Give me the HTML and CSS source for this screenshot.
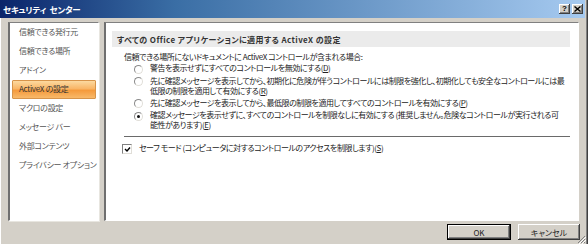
FILE: index.html
```html
<!doctype html>
<html lang="ja">
  <head>
    <meta charset="utf-8">
    <title>セキュリティ センター</title>
    <link rel="stylesheet" href="styles.css">
  </head>
  <body>
    <div class="window">
      <div class="titlebar">
        <span class="title">セキュリティ&nbsp;センター</span>
        <div class="caption-buttons">
          <span class="cap-btn help">?</span>
          <span class="cap-btn close">
            <svg width="7" height="6" viewBox="0 0 7 6"><path d="M0.5 0.5 L6.5 5.5 M6.5 0.5 L0.5 5.5" stroke="#000" stroke-width="1.4"/></svg>
          </span>
        </div>
      </div>

      <div class="content">
        <ul class="nav">
          <li>信頼できる発行元</li>
          <li>信頼できる場所</li>
          <li>アドイン</li>
          <li class="active">ActiveX の設定</li>
          <li>マクロの設定</li>
          <li>メッセージ バー</li>
          <li>外部コンテンツ</li>
          <li>プライバシー オプション</li>
        </ul>

        <div class="pane">
          <div class="section-head">すべての Office アプリケーションに適用する ActiveX の設定</div>
          <div class="settings">
            <div class="intro">信頼できる場所にないドキュメントに ActiveX コントロールが含まれる場合:</div>
            <div class="options">
              <div class="option">
                <span class="radio"></span>
                <span class="label">警告を表示せずにすべてのコントロールを無効にする(<u>D</u>)</span>
              </div>
              <div class="option">
                <span class="radio"></span>
                <span class="label">先に確認メッセージを表示してから、初期化に危険が伴うコントロールには制限を強化し、初期化しても安全なコントロールには最<br>低限の制限を適用して有効にする(<u>R</u>)</span>
              </div>
              <div class="option">
                <span class="radio"></span>
                <span class="label">先に確認メッセージを表示してから、最低限の制限を適用してすべてのコントロールを有効にする(<u>P</u>)</span>
              </div>
              <div class="option">
                <span class="radio checked"></span>
                <span class="label">確認メッセージを表示せずに、すべてのコントロールを制限なしに有効にする (推奨しません。危険なコントロールが実行される可<br>能性があります)(<u>E</u>)</span>
              </div>
            </div>
            <div class="separator"></div>
            <div class="option check-row">
              <span class="checkbox">
                <svg width="7" height="7" viewBox="0 0 7 7"><path d="M1 3 L3 5 L6 1.5" fill="none" stroke="#000" stroke-width="1.4"/></svg>
              </span>
              <span class="label">セーフ モード (コンピュータに対するコントロールのアクセスを制限します)(<u>S</u>)</span>
            </div>
          </div>
        </div>
      </div>

      <div class="footer">
        <button class="btn default">OK</button>
        <button class="btn">キャンセル</button>
      </div>

      <svg class="grip" width="10" height="10" viewBox="0 0 10 10">
        <path d="M9 2 L2 9 M9 5 L5 9 M9 8 L8 9" stroke="#808080" stroke-width="1"/>
        <path d="M10 3 L3 10 M10 6 L6 10" stroke="#fff" stroke-width="1"/>
      </svg>
    </div>
  </body>
</html>
```

FILE: styles.css
```css
body {
  margin: 0;
  width: 588px;
  height: 244px;
  overflow: hidden;
  background: #d4d0c8;
  font-family: "Noto Sans CJK JP", "Noto Sans", sans-serif;
  font-size: 8px;
  font-feature-settings: "palt";
  color: #222;
}
.window {
  position: relative;
  height: 244px;
  display: flex;
  flex-direction: column;
  box-shadow: inset -1px 0 #404040, inset -2px 0 #808080, inset 1px 0 #fff;
}
.titlebar {
  height: 18px;
  margin-right: 3px;
  display: flex;
  align-items: center;
  padding: 0 2px 0 3px;
  background: linear-gradient(to right, #0a246a 0%, #3a6ea5 30%, #a6caf0 100%);
}
.title {
  color: #fff;
  font-weight: bold;
  font-size: 8.5px;
  letter-spacing: -0.3px;
  word-spacing: 2px;
}
.caption-buttons {
  margin-left: auto;
  display: flex;
  gap: 2px;
}
.cap-btn {
  width: 11px;
  height: 10px;
  display: flex;
  align-items: center;
  justify-content: center;
  background: #d4d0c8;
  box-shadow: inset -1px -1px #404040, inset 1px 1px #fff, inset -2px -2px #808080;
  font-family: "Liberation Sans", sans-serif;
  font-weight: bold;
  font-size: 8px;
  line-height: 1;
  color: #000;
}
.content {
  display: flex;
  gap: 5px;
  padding: 4px 9px 0 8px;
  height: 199px;
}
.nav {
  list-style: none;
  margin: 0;
  width: 91px;
  flex-shrink: 0;
  box-sizing: border-box;
  padding: 0 2px;
  background: #fff;
  border-top: 1px solid #808080;
  border-left: 2px solid #6f6f6f;
  border-right: 1px solid #fff;
  border-bottom: 1px solid #fff;
  box-shadow: 1px 1px 0 #e8e6e0;
}
.nav li {
  height: 19px;
  display: flex;
  align-items: center;
  padding: 0 0 2px 7px;
  box-sizing: border-box;
  color: #555;
  white-space: nowrap;
  letter-spacing: -0.3px;
}
.nav li.active {
  padding-left: 6px;
  color: #333;
  border: 1px solid #d7944a;
  border-radius: 1px;
  background: linear-gradient(to bottom, #fcd9a0 0%, #f9b667 45%, #f59a3c 55%, #f8b96a 100%);
}
.pane {
  flex: 1;
  min-width: 0;
  overflow: hidden;
  background: #fff;
  border-top: 1px solid #808080;
  border-left: 2px solid #6f6f6f;
  border-right: 1px solid #fff;
  border-bottom: 1px solid #fff;
  padding: 8px 8px 0 6px;
}
.section-head {
  height: 16px;
  display: flex;
  align-items: center;
  padding-left: 5px;
  background: #ebebeb;
  font-weight: bold;
  color: #333;
  white-space: nowrap;
  letter-spacing: 0.4px;
}
.settings {
  padding: 0 0 0 12px;
  letter-spacing: -0.45px;
}
.intro {
  margin-top: 5px;
  line-height: 10px;
  white-space: nowrap;
}
.options {
  padding-left: 10px;
  display: flex;
  flex-direction: column;
  gap: 2px;
  margin-top: 1px;
}
.option {
  display: flex;
  align-items: flex-start;
  gap: 7px;
}
.label {
  line-height: 10px;
  white-space: nowrap;
}
.label u {
  text-decoration: underline;
  text-underline-offset: 1px;
}
.radio {
  width: 7px;
  height: 7px;
  margin-top: 1.5px;
  flex-shrink: 0;
  border-radius: 50%;
  border: 1px solid #8a8a8a;
  border-bottom-color: #e0ded8;
  border-right-color: #e0ded8;
  background: #fff;
  display: flex;
  align-items: center;
  justify-content: center;
}
.radio.checked::after {
  content: "";
  width: 3px;
  height: 3px;
  border-radius: 50%;
  background: #111;
}
.separator {
  height: 1px;
  background: #6a6a6a;
  margin: 6px 0 6px;
}
.check-row {
  gap: 7px;
  margin-left: -2px;
}
.checkbox {
  width: 8px;
  height: 8px;
  margin-top: 1px;
  flex-shrink: 0;
  border: 1px solid #808080;
  border-bottom-color: #e0ded8;
  border-right-color: #e0ded8;
  background: #fff;
  display: flex;
  align-items: center;
  justify-content: center;
}
.footer {
  display: flex;
  justify-content: flex-end;
  gap: 7px;
  padding: 3px 8px 0 0;
}
.btn {
  width: 62px;
  height: 16px;
  padding: 0;
  font-family: inherit;
  font-size: 8px;
  font-feature-settings: "palt";
  color: #222;
  background: #d4d0c8;
  border: none;
  box-shadow: inset -1px -1px #404040, inset 1px 1px #fff, inset -2px -2px #808080;
}
.btn.default {
  width: 64px;
  box-shadow: inset 0 0 0 1px #000, inset -2px -2px #404040, inset 2px 2px #fff, inset -3px -3px #808080;
}
.grip {
  position: absolute;
  right: 2px;
  bottom: 0;
}
```
